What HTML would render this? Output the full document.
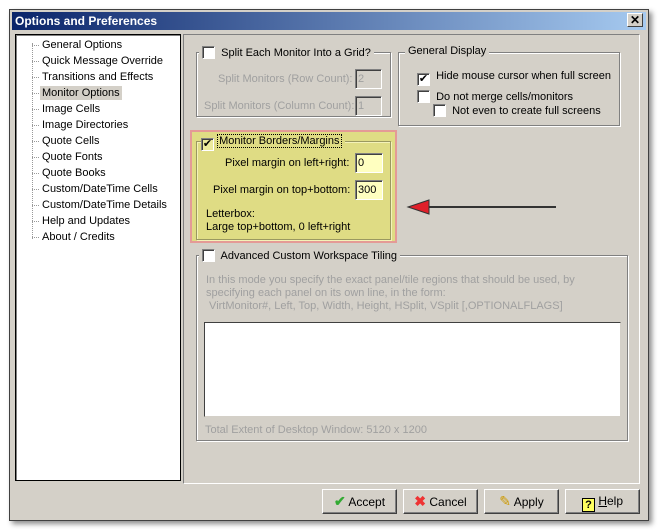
<!DOCTYPE html>
<html><head><style>
*{box-sizing:border-box}
body{margin:0;width:659px;height:531px;background:#fff;font-family:"Liberation Sans",Arial,sans-serif;font-size:11px;color:#000;position:relative;overflow:hidden}
.abs{position:absolute}
.win{left:9px;top:9px;width:640px;height:512px;background:#d4d0c8;border:1px solid #404040;box-shadow:3px 3px 5px rgba(0,0,0,.45)}
.title{left:12px;top:12px;width:634px;height:18px;background:linear-gradient(to right,#0a246a,#a6caf0);color:#fff;font-weight:bold;font-size:12px;padding:1px 3px;line-height:16px}
.xb{left:627px;top:13px;width:16px;height:14px;background:#d4d0c8;border:1px solid;border-color:#fff #404040 #404040 #fff;font-size:12px;font-weight:bold;line-height:12px;text-align:center}
.tree{left:15px;top:34px;width:166px;height:447px;background:#fff;border:1px solid #000;box-shadow:inset 1px 1px 0 #808080}
.tree div.i{position:absolute;left:24px;font-size:11px;line-height:14px;padding:0 2px;white-space:nowrap}
.tree div.i:before{content:"";position:absolute;left:-8px;top:7px;width:7px;border-top:1px dotted #999}
.dots{position:absolute;left:16px;width:1px;top:8px;height:196px;border-left:1px dotted #999}
.content{left:183px;top:34px;width:457px;height:450px;border:1px solid;border-color:#808080 #fff #fff #808080}
.gb{position:absolute;border:1px solid #808080;box-shadow:1px 1px 0 #fff,inset 1px 1px 0 #fff}
.lg{position:absolute;background:#d4d0c8;padding:0 3px;white-space:nowrap}
.cb{display:inline-block;width:13px;height:13px;background:#fff;border:1px solid;border-color:#808080 #fff #fff #808080;box-shadow:inset 1px 1px 0 #404040;vertical-align:-3px;position:relative;font-size:11px;line-height:10px;text-align:center}
.t{position:absolute;white-space:nowrap}
.g{color:#a0a0a0}
.inp{position:absolute;width:28px;height:20px;border:1px solid;border-color:#808080 #fff #fff #808080;box-shadow:inset 1px 1px 0 #404040;padding:2px 2px;line-height:14px}
.btn{position:absolute;top:489px;width:75px;height:25px;border:1px solid;border-color:#fff #404040 #404040 #fff;box-shadow:inset -1px -1px 0 #808080;text-align:center;line-height:23px;font-size:12px}
</style></head><body>
<div class="abs win"></div>
<div class="abs title">Options and Preferences</div>
<div class="abs xb">✕</div>
<div class="abs tree">
<div class="dots"></div>
<div class="i" style="top:3px">General Options</div>
<div class="i" style="top:19px">Quick Message Override</div>
<div class="i" style="top:35px">Transitions and Effects</div>
<div class="i" style="top:51px;background:#d4d0c8">Monitor Options</div>
<div class="i" style="top:67px">Image Cells</div>
<div class="i" style="top:83px">Image Directories</div>
<div class="i" style="top:99px">Quote Cells</div>
<div class="i" style="top:115px">Quote Fonts</div>
<div class="i" style="top:131px">Quote Books</div>
<div class="i" style="top:147px">Custom/DateTime Cells</div>
<div class="i" style="top:163px">Custom/DateTime Details</div>
<div class="i" style="top:179px">Help and Updates</div>
<div class="i" style="top:195px">About / Credits</div>
</div>
<div class="abs content"></div>

<div class="gb" style="left:196px;top:52px;width:195px;height:65px"></div>
<div class="lg" style="left:199px;top:46px"><span class="cb"></span>&nbsp; Split Each Monitor Into a Grid?</div>
<div class="t g" style="left:218px;top:73px">Split Monitors (Row Count):</div>
<div class="inp g" style="left:355px;top:69px;width:27px">2</div>
<div class="t g" style="left:204px;top:100px">Split Monitors (Column Count):</div>
<div class="inp g" style="left:355px;top:96px;width:27px">1</div>

<div class="gb" style="left:398px;top:52px;width:222px;height:74px"></div>
<div class="lg" style="left:405px;top:45px">General Display</div>
<div class="t" style="left:417px;top:70px"><span class="cb">✔</span>&nbsp; Hide mouse cursor when full screen</div>
<div class="t" style="left:417px;top:90px"><span class="cb"></span>&nbsp; Do not merge cells/monitors</div>
<div class="t" style="left:433px;top:104px"><span class="cb"></span>&nbsp; Not even to create full screens</div>

<div class="abs" style="left:190px;top:130px;width:207px;height:113px;background:#dfdc84;border:2px solid #e49a96"></div>
<div class="gb" style="left:196px;top:141px;width:195px;height:99px;border-color:#9a9860;box-shadow:1px 1px 0 #f4f2b8,inset 1px 1px 0 #f4f2b8"></div>
<div class="t" style="left:201px;top:135px;background:#dfdc84;padding-right:3px"><span class="cb" style="background:#ecea9c">✔</span>&nbsp;<span style="border:1px dotted #000;padding:0 1px">Monitor Borders/Margins</span></div>
<div class="t" style="left:225px;top:157px">Pixel margin on left+right:</div>
<div class="inp" style="left:355px;top:153px;background:#ffffc0">0</div>
<div class="t" style="left:213px;top:184px">Pixel margin on top+bottom:</div>
<div class="inp" style="left:355px;top:180px;background:#ffffc0">300</div>
<div class="t" style="left:206px;top:208px">Letterbox:</div>
<div class="t" style="left:206px;top:221px">Large top+bottom, 0 left+right</div>

<svg class="abs" style="left:405px;top:198px" width="155" height="20"><line x1="20" y1="9" x2="151" y2="9" stroke="#333" stroke-width="2"/><polygon points="3,9 24,2 24,16" fill="#e0202a" stroke="#333"/></svg>

<div class="gb" style="left:196px;top:255px;width:432px;height:186px"></div>
<div class="lg" style="left:199px;top:249px"><span class="cb"></span>&nbsp; Advanced Custom Workspace Tiling</div>
<div class="t g" style="left:206px;top:274px;line-height:13px">In this mode you specify the exact panel/tile regions that should be used, by<br>specifying each panel on its own line, in the form:<br>&nbsp;VirtMonitor#, Left, Top, Width, Height, HSplit, VSplit [,OPTIONALFLAGS]</div>
<div class="abs" style="left:204px;top:322px;width:417px;height:95px;background:#fff;border:1px solid;border-color:#404040 #d4d0c8 #d4d0c8 #404040"></div>
<div class="t g" style="left:205px;top:424px">Total Extent of Desktop Window: 5120 x 1200</div>

<div class="btn" style="left:322px"><span style="color:#3a3;font-weight:bold;font-size:14px">✔</span> Accept</div>
<div class="btn" style="left:403px"><span style="color:#e33;font-weight:bold;font-size:14px">✖</span> Cancel</div>
<div class="btn" style="left:484px"><span style="color:#c90;font-size:14px">✎</span> Apply</div>
<div class="btn" style="left:565px"><span style="display:inline-block;width:13px;height:14px;border:1px solid #000;background:#ffff60;font-weight:bold;line-height:12px;font-size:11px;vertical-align:-3px">?</span> <u>H</u>elp</div>
</body></html>
